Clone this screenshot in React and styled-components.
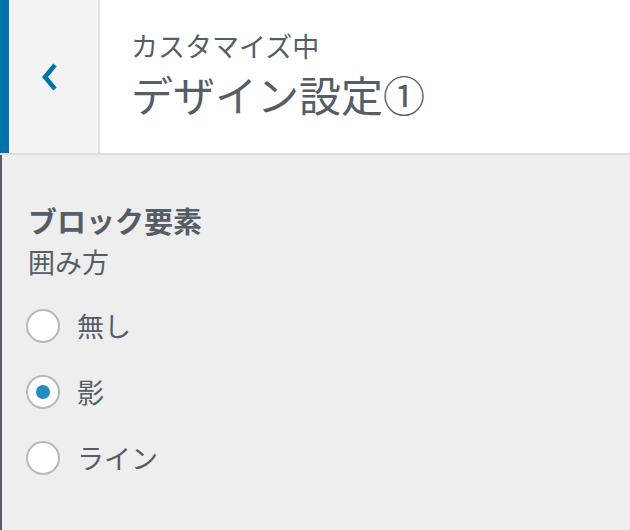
import React from 'react'
import styled, { createGlobalStyle } from 'styled-components'

const GlobalStyle = createGlobalStyle`
  html, body {
    margin: 0;
    padding: 0;
    background: #eeeeee;
    overflow: hidden;
  }
  body {
    font-family: "Noto Sans CJK JP", "Noto Sans", sans-serif;
    color: #555d66;
  }
`

const Panel = styled.div`
  width: 630px;
  height: 530px;
  display: flex;
  flex-direction: column;
  background: #eeeeee;
`

const Header = styled.header`
  display: flex;
  height: 153px;
  border-bottom: 2px solid #dddddd;
  background: #ffffff;
`

const BackButton = styled.button`
  width: 100px;
  flex: none;
  display: flex;
  align-items: center;
  justify-content: flex-start;
  padding: 0 0 0 32px;
  margin: 0;
  border: none;
  border-left: 9px solid #0073aa;
  border-right: 2px solid #dddddd;
  background: #f3f3f5;
  color: #0073aa;
  cursor: pointer;
`

const TitleBlock = styled.div`
  flex: 1;
  display: flex;
  flex-direction: column;
  justify-content: center;
  padding-left: 31px;
  padding-bottom: 4px;
`

const Crumb = styled.span`
  font-size: 27px;
  line-height: 38px;
`

const Title = styled.h1`
  margin: 0;
  font-size: 42px;
  font-weight: 400;
  line-height: 58px;
`

const Body = styled.section`
  flex: 1;
  border-left: 2px solid #555d66;
  padding: 45px 24px 0 24px;
`

const SectionTitle = styled.h2`
  margin: 0 0 0 2px;
  font-size: 29px;
  font-weight: 700;
  line-height: 40px;
`

const FieldLabel = styled.div`
  margin: 2px 0 0 2px;
  font-size: 27px;
  line-height: 40px;
`

const Options = styled.div`
  display: flex;
  flex-direction: column;
  gap: 32px;
  margin-top: 27px;
`

const Option = styled.label`
  display: flex;
  align-items: center;
  gap: 17px;
  font-size: 27px;
  line-height: 34px;
`

const Radio = styled.span`
  width: 34px;
  height: 34px;
  box-sizing: border-box;
  border-radius: 50%;
  border: 2px solid #b4b9be;
  background: #ffffff;
  display: flex;
  align-items: center;
  justify-content: center;
  &::after {
    content: '';
    width: 14px;
    height: 14px;
    border-radius: 50%;
    background: ${p => (p.$checked ? '#1e8cbe' : 'transparent')};
  }
`

const options = ['無し', '影', 'ライン']

export default function App() {
  const selected = '影'
  return (
    <Panel>
      <GlobalStyle />
      <Header>
        <BackButton aria-label="戻る">
          <svg width="18" height="30" viewBox="0 0 18 30">
            <path d="M14 3 L4 15 L14 27" fill="none" stroke="currentColor" strokeWidth="4.5" />
          </svg>
        </BackButton>
        <TitleBlock>
          <Crumb>カスタマイズ中</Crumb>
          <Title>デザイン設定①</Title>
        </TitleBlock>
      </Header>
      <Body>
        <SectionTitle>ブロック要素</SectionTitle>
        <FieldLabel>囲み方</FieldLabel>
        <Options>
          {options.map(o => (
            <Option key={o}>
              <Radio $checked={o === selected} />
              {o}
            </Option>
          ))}
        </Options>
      </Body>
    </Panel>
  )
}
